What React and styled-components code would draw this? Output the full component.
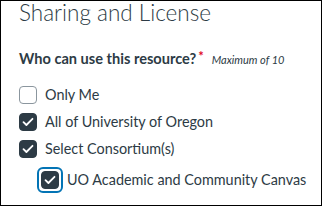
import styled, { createGlobalStyle } from 'styled-components';

const GlobalStyle = createGlobalStyle`
    html, body {
        margin: 0;
        padding: 0;
        background: #fff;
    }
    * {
        box-sizing: border-box;
    }
`

const options = [
    { label: 'Only Me', checked: false, nested: false },
    { label: 'All of University of Oregon', checked: true, nested: false },
    { label: 'Select Consortium(s)', checked: true, nested: false },
    { label: 'UO Academic and Community Canvas', checked: true, nested: true, focused: true },
];

function Check({ checked, focused }) {
    return (
        <FocusRing $focused={focused}>
            <Box $checked={checked}>
                {checked && (
                    <svg width="12" height="10" viewBox="0 0 12 10">
                        <path d="M1.5 5.2 L4.4 8 L10.5 1.8" fill="none" stroke="#fff" strokeWidth="1.8" strokeLinecap="round" strokeLinejoin="round" />
                    </svg>
                )}
            </Box>
        </FocusRing>
    )
}

export default function App() {
    return (
        <>
            <GlobalStyle />
            <Frame>
                <Title>Sharing and License</Title>
                <Legend>
                    <Question>Who can use this resource?</Question>
                    <Required>*</Required>
                    <Hint>Maximum of 10</Hint>
                </Legend>
                <OptionList>
                    {options.map((o) => (
                        <Option key={o.label} $nested={o.nested}>
                            <Check checked={o.checked} focused={o.focused} />
                            <OptionLabel>{o.label}</OptionLabel>
                        </Option>
                    ))}
                </OptionList>
            </Frame>
        </>
    )
};

const Frame = styled.div`
    width: 322px;
    height: 206px;
    border: 1px solid #000;
    padding: 0 18px;
    font-family: Lato, 'Liberation Sans', sans-serif;
    color: #2d3b45;
    overflow: hidden;
`

const Title = styled.h2`
    margin: 0;
    font-size: 22.5px;
    font-weight: 300;
    line-height: 24px;
    color: #2d3b45;
`

const Legend = styled.div`
    display: flex;
    align-items: baseline;
    margin-top: 25px;
    height: 22px;
`

const Question = styled.span`
    font-size: 14.6px;
    font-weight: 700;
`

const Required = styled.span`
    color: #e0061f;
    font-size: 13px;
    font-weight: 700;
    margin-left: 2px;
    position: relative;
    top: -3px;
`

const Hint = styled.span`
    font-size: 11px;
    font-style: italic;
    margin-left: 8px;
`

const OptionList = styled.div`
    display: flex;
    flex-direction: column;
    gap: 9px;
    margin-top: 14px;
`

const Option = styled.div`
    display: flex;
    align-items: center;
    gap: 8px;
    height: 18px;
    padding-left: ${(p) => (p.$nested ? '22px' : '0')};
    margin-top: ${(p) => (p.$nested ? '4px' : '0')};
`

const FocusRing = styled.span`
    display: flex;
    padding: 2px;
    margin: -4px;
    border: 2px solid ${(p) => (p.$focused ? '#0374b5' : 'transparent')};
    border-radius: 6px;
`

const Box = styled.span`
    display: flex;
    align-items: center;
    justify-content: center;
    width: 18px;
    height: 18px;
    border-radius: 4px;
    border: 1px solid ${(p) => (p.$checked ? '#2d3b45' : '#8b969e')};
    background: ${(p) => (p.$checked ? '#2d3b45' : '#fff')};
`

const OptionLabel = styled.span`
    font-size: 14.4px;
    line-height: 18px;
    white-space: nowrap;
`
